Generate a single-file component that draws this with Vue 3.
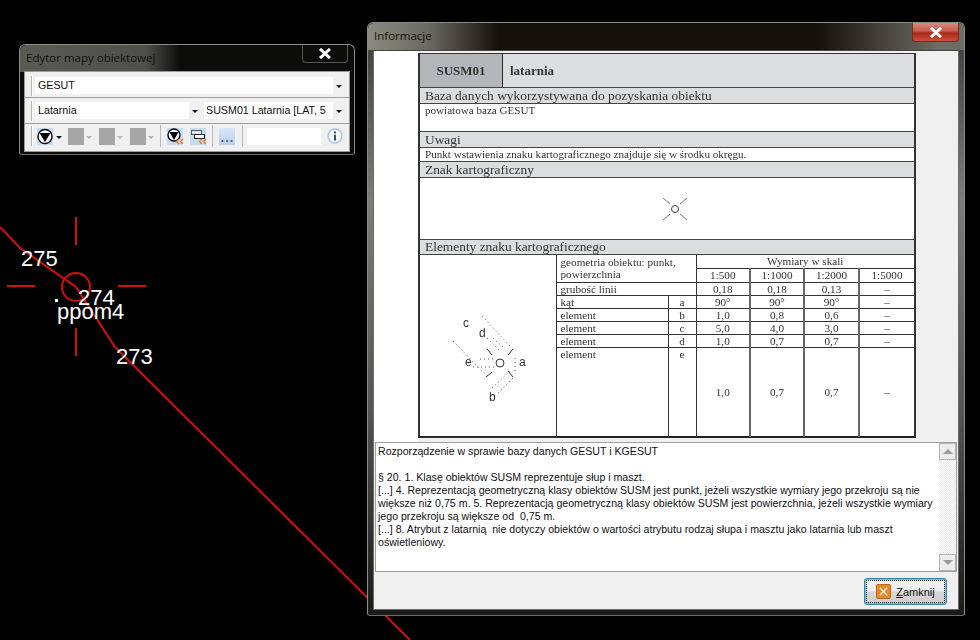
<template>
  <div class="desktop">
    <svg class="map" width="980" height="640" viewBox="0 0 980 640">
      <g fill="none" stroke="#d40f0f" stroke-width="2">
        <polyline points="0,227 20,248 76,287 115,347 410,640" />
        <circle cx="76" cy="287" r="14" />
        <path d="M76 217V245M76 328V356M7 286H35M118 286H146" />
      </g>
      <rect x="55" y="299" width="3" height="3" fill="#fff" />
      <g class="map-label">
        <text x="21" y="266">275</text>
        <text x="78" y="305">274</text>
        <text x="57" y="319">ppom4</text>
        <text x="116" y="364">273</text>
      </g>
    </svg>

    <div class="win toolbar-win">
      <div class="titlebar">
        <span class="title">Edytor mapy obiektowej</span>
        <div class="close-btn">
          <svg width="14" height="11" viewBox="0 0 14 11"><path d="M2 1L12 10M12 1L2 10" stroke="#fff" stroke-width="3" /></svg>
        </div>
      </div>
      <div class="toolbar-body">
        <div class="tool-row first">
          <i class="grip"></i>
          <div class="combo wide"><span>GESUT</span></div>
          <i class="caret"></i>
        </div>
        <div class="tool-row">
          <i class="grip"></i>
          <div class="combo type"><span>Latarnia</span></div>
          <i class="caret"></i>
          <div class="combo symbol"><span>SUSM01 Latarnia [LAT, 5</span></div>
          <i class="caret"></i>
        </div>
        <div class="tool-row icons">
          <i class="grip"></i>
          <svg class="ic filter" width="16" height="17" viewBox="0 0 16 17">
            <rect width="16" height="17" fill="#c6dcf6" />
            <circle cx="8" cy="8.5" r="7" fill="#fff" stroke="#000" stroke-width="1.4" />
            <path d="M2.5 5H13.5L8 14Z" fill="#000" />
          </svg>
          <i class="caret dark"></i>
          <template v-for="n in 3" :key="n">
            <span class="swatch"></span>
            <i class="caret faint"></i>
          </template>
          <i class="sep sep-a"></i>
          <svg class="ic" width="17" height="17" viewBox="0 0 17 17">
            <rect width="16" height="17" fill="#c6dcf6" />
            <circle cx="7" cy="7" r="6" fill="#fff" stroke="#000" stroke-width="1.3" />
            <path d="M2.5 4H11.5L7 12Z" fill="#000" />
            <path d="M12 11L9.5 13.500L12 16M16 11L13.500 13.500L16 16" fill="none" stroke="#e8781c" stroke-width="1.4" />
          </svg>
          <svg class="ic layers" width="17" height="17" viewBox="0 0 17 17">
            <rect width="16" height="17" fill="#c6dcf6" />
            <rect x="1.500" y="2.500" width="10" height="4" fill="#e4e8ee" stroke="#555" />
            <rect x="4.500" y="6.500" width="10" height="4" fill="#fff" stroke="#222" />
            <path d="M12 11L9.500 13.500L12 16M16 11L13.500 13.500L16 16" fill="none" stroke="#e8781c" stroke-width="1.4" />
          </svg>
          <i class="sep sep-b"></i>
          <svg class="ic" width="16" height="17" viewBox="0 0 16 17">
            <defs>
              <linearGradient id="dotsBg" x1="0" y1="0" x2="0" y2="1">
                <stop offset="0" stop-color="#d9e7f9" />
                <stop offset="1" stop-color="#b6cdf0" />
              </linearGradient>
            </defs>
            <rect width="16" height="17" fill="url(#dotsBg)" />
            <circle cx="3.500" cy="13" r="1.100" fill="#4a5870" />
            <circle cx="8" cy="13" r="1.100" fill="#4a5870" />
            <circle cx="12.500" cy="13" r="1.100" fill="#4a5870" />
          </svg>
          <i class="sep sep-c"></i>
          <div class="search"></div>
          <svg class="ic" width="16" height="16" viewBox="0 0 16 16">
            <circle cx="8" cy="8" r="7" fill="#f6f9fd" stroke="#a3c5ea" stroke-width="1.300" />
            <path d="M7 3.500H9V5.500H7ZM7 6.800H9V12.500H7Z" fill="#3a4f6a" />
          </svg>
        </div>
      </div>
    </div>

    <div class="win info-win">
      <div class="titlebar">
        <span class="title">Informacje</span>
        <div class="close-btn red">
          <svg width="14" height="11" viewBox="0 0 14 11"><path d="M2 1L12 10M12 1L2 10" stroke="#fff" stroke-width="3" /></svg>
        </div>
      </div>
      <div class="client">
        <div class="doc-pane">
          <div class="doc">
            <div class="doc-head">
              <div class="code">SUSM01</div>
              <div class="name">latarnia</div>
            </div>
            <div class="doc-h">Baza danych wykorzystywana do pozyskania obiektu</div>
            <div class="doc-t base">powiatowa baza GESUT</div>
            <div class="doc-h">Uwagi</div>
            <div class="doc-t">Punkt wstawienia znaku kartograficznego znajduje się w środku okręgu.</div>
            <div class="doc-h">Znak kartograficzny</div>
            <div class="doc-t sign">
              <svg width="28" height="28" viewBox="0 0 28 28">
                <circle cx="14" cy="14" r="3.500" fill="none" stroke="#444" />
                <path d="M2 3L9 9M26 3L19 9M2 25L9 19M26 25L19 19" stroke="#777" fill="none" />
              </svg>
            </div>
            <div class="doc-h short">Elementy znaku kartograficznego</div>
            <table class="dims">
              <colgroup>
                <col style="width: 136px" />
                <col style="width: 112px" />
                <col style="width: 28px" />
                <col style="width: 54px" />
                <col style="width: 54px" />
                <col style="width: 55px" />
                <col />
              </colgroup>
              <tbody>
                <tr class="r13">
                  <td rowspan="8" class="figure">
                    <svg width="135" height="180" viewBox="420 254 135 180">
                      <g fill="none" stroke="#555" stroke-dasharray="1 3">
                        <path d="M482 315L510 345M453 340L485 373M492 387L510 370M498 392L515 375" />
                        <path d="M473 366H495M480 358H493M487 337L500 350M493 337L505 348M515 357V370" />
                      </g>
                      <circle cx="500" cy="362" r="4" fill="none" stroke="#333" />
                      <path d="M487 348L492 354M513 348L508 354M492 371L486 376M508 370L513 376" stroke="#333" fill="none" />
                      <g class="fig-label">
                        <text x="463" y="326">c</text>
                        <text x="479" y="336">d</text>
                        <text x="465" y="365">e</text>
                        <text x="519" y="365">a</text>
                        <text x="489" y="400">b</text>
                      </g>
                    </svg>
                  </td>
                  <td colspan="2" rowspan="2" class="left">geometria obiektu: punkt,<br />powierzchnia</td>
                  <td colspan="4" class="scale-h">Wymiary w skali</td>
                </tr>
                <tr class="r14">
                  <td v-for="s in scales" :key="s" class="v">{{ s }}</td>
                </tr>
                <tr class="r13">
                  <td colspan="2" class="left">grubość linii</td>
                  <td v-for="(v, i) in lineWidths" :key="i" class="v">{{ v }}</td>
                </tr>
                <tr v-for="row in elements" :key="row.key" class="r13">
                  <td class="left">{{ row.name }}</td>
                  <td class="mid">{{ row.key }}</td>
                  <td v-for="(v, i) in row.values" :key="i" class="v">{{ v }}</td>
                </tr>
                <tr class="last">
                  <td class="left top">element</td>
                  <td class="mid top">e</td>
                  <td v-for="(v, i) in lastValues" :key="i" class="v">{{ v }}</td>
                </tr>
              </tbody>
            </table>
          </div>
        </div>

        <div class="memo">
          <div class="memo-text">
            <div v-for="(line, i) in memoLines" :key="i" class="memo-line">{{ line }}</div>
          </div>
          <div class="scrollbar">
            <div class="sb-btn"><i class="tri up"></i></div>
            <div class="sb-track"></div>
            <div class="sb-btn"><i class="tri down"></i></div>
          </div>
        </div>

        <div class="actions">
          <button class="close-action">
            <svg width="15" height="15" viewBox="0 0 16 16">
              <rect x="0.500" y="0.500" width="15" height="15" rx="1.500" fill="#e8862a" stroke="#b8641a" />
              <path d="M4 4L12 12M12 4L4 12" stroke="#fff3df" stroke-width="1.500" />
            </svg>
            <span><u>Z</u>amknij</span>
          </button>
        </div>
      </div>
    </div>
  </div>
</template>

<script setup>
const scales = ["1:500", "1:1000", "1:2000", "1:5000"];
const lineWidths = ["0,18", "0,18", "0,13", "–"];
const elements = [
  { key: "a", name: "kąt", values: ["90°", "90°", "90°", "–"] },
  { key: "b", name: "element", values: ["1,0", "0,8", "0,6", "–"] },
  { key: "c", name: "element", values: ["5,0", "4,0", "3,0", "–"] },
  { key: "d", name: "element", values: ["1,0", "0,7", "0,7", "–"] },
];
const lastValues = ["1,0", "0,7", "0,7", "–"];

const memoLines = [
  "Rozporządzenie w sprawie bazy danych GESUT i KGESUT",
  "",
  "§ 20. 1. Klasę obiektów SUSM reprezentuje słup i maszt.",
  "[...] 4. Reprezentacją geometryczną klasy obiektów SUSM jest punkt, jeżeli wszystkie wymiary jego przekroju są nie",
  "większe niż 0,75 m. 5. Reprezentacją geometryczną klasy obiektów SUSM jest powierzchnia, jeżeli wszystkie wymiary",
  "jego przekroju są większe od  0,75 m.",
  "[...] 8. Atrybut z latarnią  nie dotyczy obiektów o wartości atrybutu rodzaj słupa i masztu jako latarnia lub maszt",
  "oświetleniowy.",
];
</script>

<style>
html,
body {
  margin: 0;
  background: #000;
}
</style>

<style scoped>
.desktop {
  position: relative;
  width: 980px;
  height: 640px;
  overflow: hidden;
  background: #000;
  font-family: "Liberation Sans", Arial, sans-serif;
}

.map {
  position: absolute;
  left: 0;
  top: 0;
}

.map-label text {
  font-family: "Liberation Sans", Arial, sans-serif;
  font-size: 22px;
  fill: #fff;
}

.win {
  position: absolute;
  box-sizing: border-box;
  display: flex;
  flex-direction: column;
  border: 1px solid #8c8c86;
  border-bottom-color: #6a6a66;
  border-radius: 6px 6px 3px 3px;
  background: linear-gradient(#3a3a36, #7c7c78 30%, #555 65%, #1a1a18);
}

.toolbar-win {
  left: 19px;
  top: 44px;
  width: 336px;
  height: 111px;
  padding: 0 5px 3px 5px;
  background: #0c0c0a;
}

.info-win {
  left: 367px;
  top: 22px;
  width: 598px;
  height: 594px;
  padding: 0 5px 5px 5px;
}

.titlebar {
  display: flex;
  justify-content: space-between;
  margin: 0 -5px;
  padding: 0 5px 0 6px;
  height: 27px;
  flex: none;
  border-radius: 6px 6px 0 0;
  background: linear-gradient(90deg, #8a8a80 0, #6a6a62 60px, #14110b 130px, #14110b 450px, #6c6c64 570px);
}

.toolbar-win .titlebar {
  padding-right: 6px;
  background: linear-gradient(90deg, #5a5a55 0, #50504b 125px, #0c0c0a 160px);
}

.title {
  font-family: "Open Sans", sans-serif;
  font-size: 11.500px;
  line-height: 26px;
  color: #111;
}

.close-btn {
  box-sizing: border-box;
  width: 46px;
  height: 18px;
  display: flex;
  align-items: center;
  justify-content: center;
  border: 1px solid #55554f;
  border-top: 0;
  border-radius: 0 0 4px 4px;
}

.close-btn.red {
  width: 47px;
  height: 19px;
  border-color: #7a2a20;
  background: linear-gradient(#d98a7e, #c85a4c 45%, #a82a18 55%, #c9503c);
}

.toolbar-body {
  box-sizing: border-box;
  flex: 1;
  border: 0;
  outline: 1px solid #9a9a9a;
  background: #f0f0f0;
}

.tool-row {
  box-sizing: border-box;
  display: flex;
  align-items: center;
  height: 26px;
  padding-left: 6px;
  border-bottom: 1px solid #a0a0a0;
}

.tool-row.first {
  padding-top: 2px;
}

.tool-row.icons {
  height: 27px;
  padding-bottom: 3px;
  border-bottom: 0;
}

.grip {
  flex: none;
  width: 1px;
  height: 20px;
  margin-right: 2px;
  background: #b8b8b8;
  border-right: 1px solid #fff;
}

.combo {
  box-sizing: border-box;
  flex: none;
  height: 17px;
  padding-left: 3px;
  background: #fff;
  font-size: 10.700px;
  line-height: 17px;
  color: #111;
  white-space: nowrap;
  overflow: hidden;
}

.combo.wide {
  width: 298px;
}

.combo.type {
  width: 154px;
}

.combo.symbol {
  width: 129px;
  margin-left: 3px;
  padding-left: 2px;
}

.caret {
  flex: none;
  width: 0;
  height: 0;
  margin: 2px 3px 0;
  border-left: 3px solid transparent;
  border-right: 3px solid transparent;
  border-top: 3px solid #111;
}

.caret.dark {
  margin-right: 6px;
}

.caret.faint {
  border-top-color: #b4b4b4;
  margin: 2px 7px 0 2px;
}

.ic {
  flex: none;
  display: block;
}

.filter {
  margin-left: 2px;
}

.swatch {
  flex: none;
  width: 16px;
  height: 17px;
  background: #a6a6a6;
}

.sep {
  flex: none;
  width: 1px;
  height: 22px;
  background: #bdbdbd;
}

.sep-a {
  margin: 0 6px 0 -1px;
}

.sep-b {
  margin: 0 6px 0 5px;
}

.sep-c {
  margin: 0 4px 0 7px;
}

.layers {
  margin-left: 6px;
}

.search {
  flex: none;
  width: 74px;
  height: 17px;
  margin-right: 6px;
  background: #fff;
}

.client {
  flex: 1;
  display: flex;
  flex-direction: column;
  background: #f0f0f0;
  border: 1px solid #6a6a66;
  border-top-color: #444;
  min-height: 0;
}

.doc-pane {
  flex: none;
  height: 391px;
  padding-top: 2px;
  padding-left: 44px;
  box-sizing: border-box;
  background: linear-gradient(90deg, #fff 44px, #f0f0f0 44px);
}

.doc {
  box-sizing: border-box;
  width: 498px;
  height: 385px;
  border: 1px solid #333;
  border-left-width: 2px;
  border-right-width: 2px;
  border-bottom: 2px solid #222;
  background: #fff;
  color: #333;
  font-family: "Liberation Serif", "Times New Roman", serif;
  filter: blur(0.25px);
}

.doc-head {
  display: flex;
  height: 33px;
  background: #dcddde;
  border-bottom: 1px solid #444;
  font-size: 13px;
  font-weight: bold;
  line-height: 33px;
}

.code {
  box-sizing: border-box;
  width: 83px;
  text-align: center;
  background: #b5b6b9;
  border-right: 1px solid #222;
}

.name {
  padding-left: 7px;
}

.doc-h {
  box-sizing: border-box;
  height: 16px;
  padding-left: 5px;
  background: #dcddde;
  border-bottom: 1px solid #444;
  font-size: 13.400px;
  line-height: 15px;
  white-space: nowrap;
}

.doc-h.short {
  height: 15px;
  line-height: 14px;
}

.doc-t {
  box-sizing: border-box;
  height: 14px;
  padding-left: 5px;
  border-bottom: 1px solid #444;
  font-size: 11.100px;
  line-height: 13px;
}

.doc-t.base {
  height: 28px;
}

.doc-t.sign {
  height: 62px;
  display: flex;
  align-items: center;
  justify-content: center;
  padding-left: 16px;
}

.dims {
  width: 100%;
  table-layout: fixed;
  border-collapse: collapse;
  font-size: 11.200px;
  line-height: 12px;
}

.dims td {
  box-sizing: border-box;
  padding: 0;
  border: 1px solid #333;
  overflow: hidden;
}

.dims tr > td:first-child {
  border-left: 0;
}

.dims tr > td:last-child {
  border-right: 0;
}

.dims tr:last-child td {
  border-bottom: 0;
}

.dims tr:first-child td {
  border-top: 0;
}

.r14 {
  height: 14px;
}

.r13 {
  height: 13px;
}

.last {
  height: 90px;
}

.figure {
  vertical-align: top;
  line-height: 0;
}

.fig-label text {
  font-family: "Liberation Sans", Arial, sans-serif;
  font-size: 12px;
  fill: #333;
}

.left {
  padding-left: 4px !important;
  text-align: left;
  white-space: nowrap;
}

.mid,
.v,
.scale-h {
  text-align: center;
}

.top {
  vertical-align: top;
}

.dims .v + .v {
  border-left: 2px solid #666;
}

.memo {
  box-sizing: border-box;
  flex: none;
  display: flex;
  width: 582px;
  height: 130px;
  margin: 0 0 0 1px;
  border: 1px solid #a0a0a0;
  background: #fff;
}

.memo-text {
  flex: 1;
  padding: 2px 0 0 2px;
  font-size: 10.600px;
  line-height: 13px;
  color: #111;
  white-space: pre;
  overflow: hidden;
}

.memo-line {
  min-height: 13px;
}

.scrollbar {
  flex: none;
  width: 17px;
  display: flex;
  flex-direction: column;
  background: repeating-conic-gradient(#eaeaea 0 25%, #fff 0 50%) 0 0 / 2px 2px;
}

.sb-btn {
  box-sizing: border-box;
  height: 17px;
  display: flex;
  align-items: center;
  justify-content: center;
  background: #ececec;
  border: 1px solid #b4b4b4;
}

.sb-track {
  flex: 1;
}

.tri {
  width: 0;
  height: 0;
  border-left: 5px solid transparent;
  border-right: 5px solid transparent;
}

.tri.up {
  border-bottom: 5px solid #9c9c9c;
}

.tri.down {
  border-top: 5px solid #9c9c9c;
}

.actions {
  flex: 1;
  display: flex;
  justify-content: flex-end;
  align-items: flex-start;
  padding: 6px 11px 0 0;
}

.close-action {
  box-sizing: border-box;
  width: 83px;
  height: 27px;
  display: flex;
  align-items: center;
  justify-content: center;
  gap: 5px;
  padding: 0;
  border: 1px solid #2f86b0;
  border-radius: 3px;
  box-shadow: inset 0 0 0 1px #6cc0dc;
  outline: 1px dotted #111;
  outline-offset: -3px;
  background: linear-gradient(#f4f4f4, #ebebeb 48%, #d6d6d6 52%, #cfcfcf);
  font-family: "Liberation Sans", Arial, sans-serif;
  font-size: 11px;
  color: #111;
}
</style>
